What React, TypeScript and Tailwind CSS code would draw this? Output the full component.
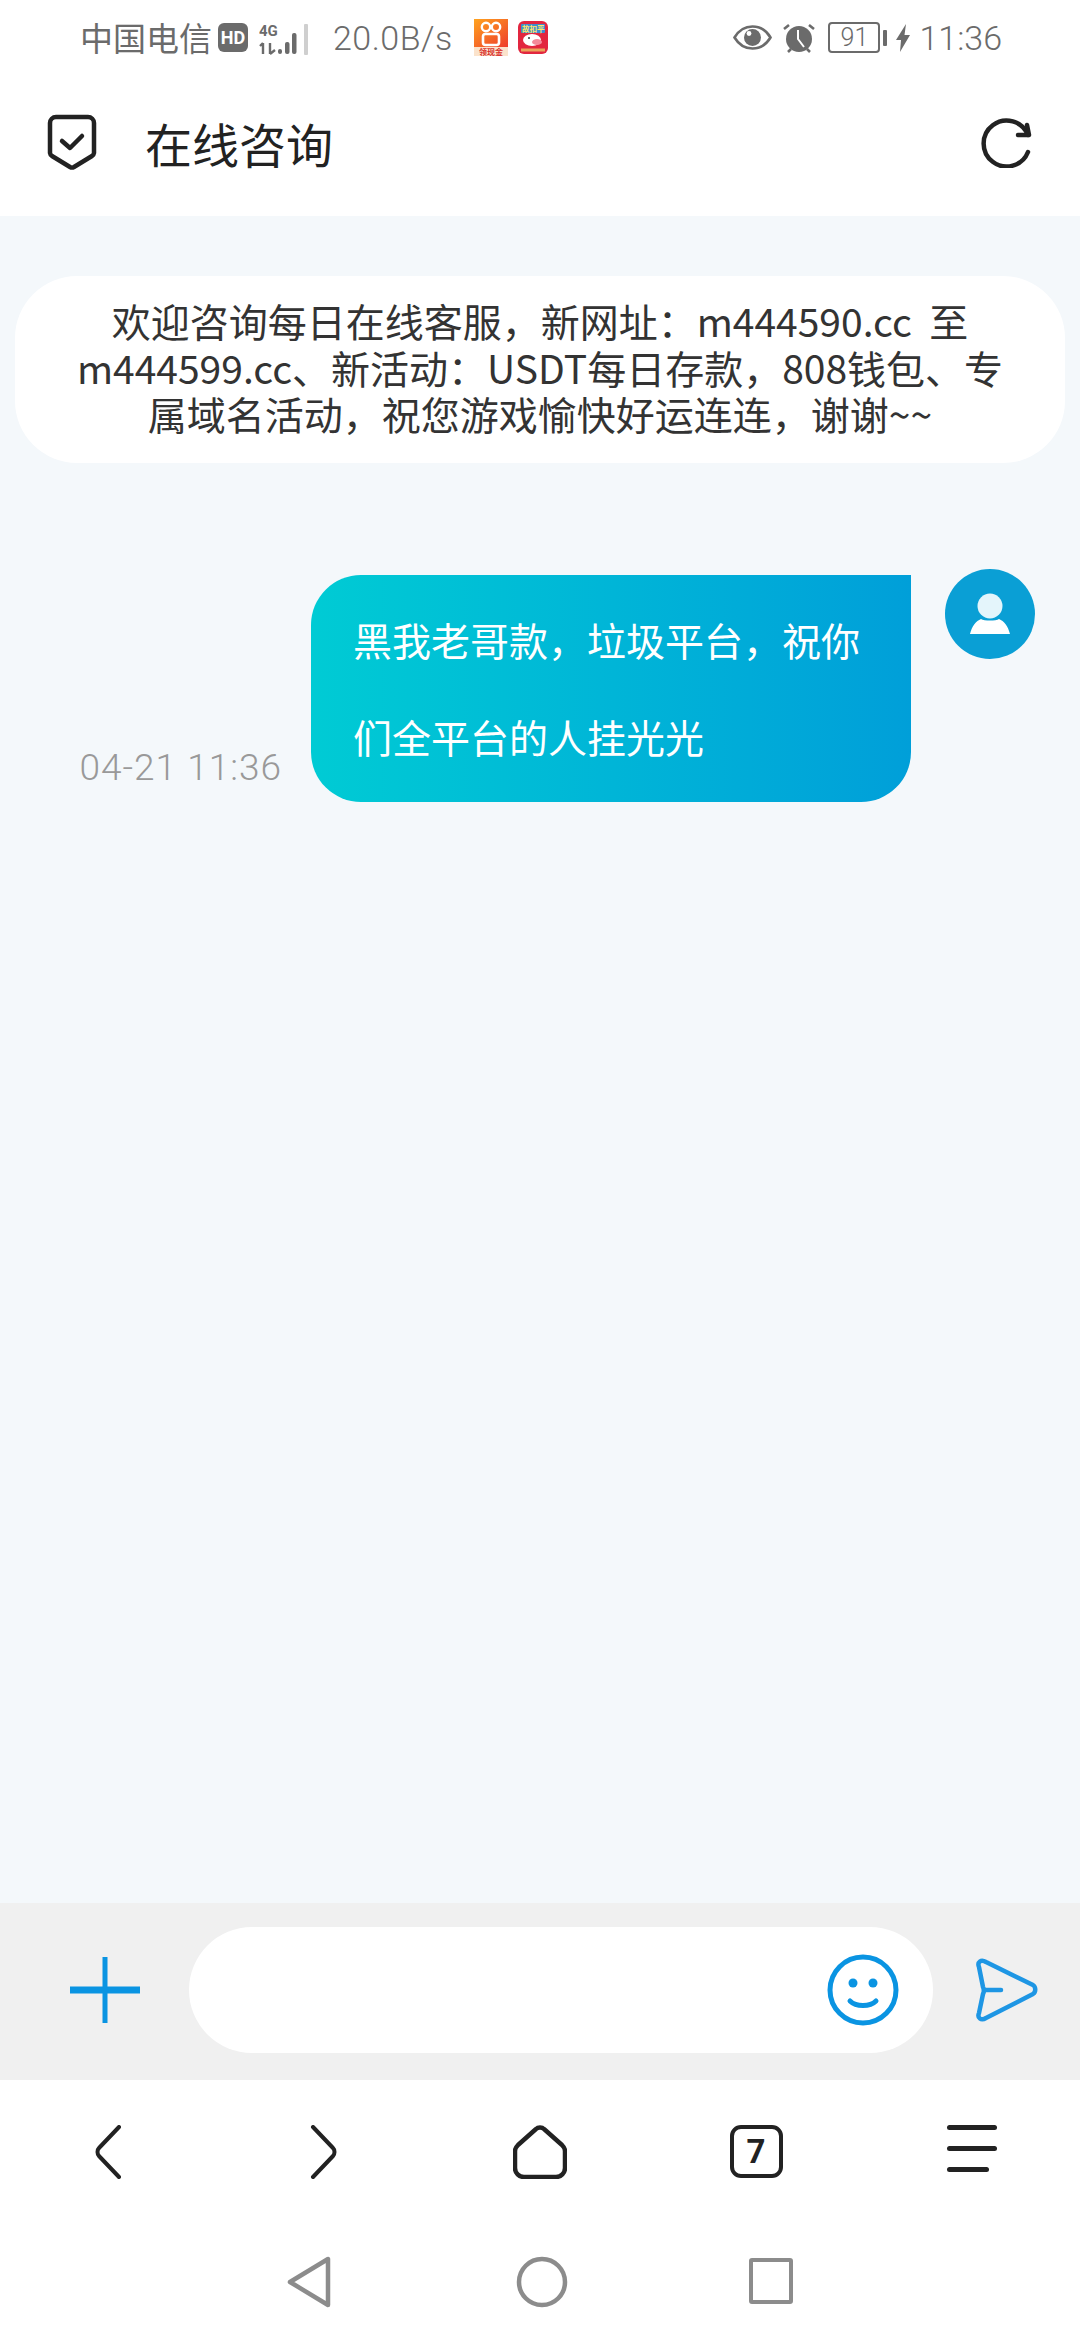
const cjk = "font-['Noto_Sans_CJK_SC','Noto_Sans',sans-serif]"

function Signal() {
  return (
    <svg width="50" height="36" viewBox="0 -4 50 36" className="ml-[11px]">
      <text x="0" y="12" fontSize="15" fontWeight="700" fontFamily="Roboto, sans-serif" fill="#6b6b6b">4G</text>
      <path d="M4 19v11M1 22l3-3M11 19v11M11 30l5-4" stroke="#6b6b6b" strokeWidth="2.4" fill="none" />
      <rect x="19" y="25" width="4" height="5" rx="2" fill="#6b6b6b" />
      <rect x="26" y="18" width="4.500" height="12" rx="2" fill="#6b6b6b" />
      <rect x="33" y="9" width="4.500" height="21" rx="2" fill="#6b6b6b" />
      <rect x="45" y="0" width="4" height="31" rx="1" fill="#cfcfcf" />
    </svg>
  )
}

function KwaiIcon() {
  return (
    <svg width="34" height="37" viewBox="0 0 34 37">
      <defs>
        <linearGradient id="kwai" x1="0" y1="0" x2="0.7" y2="1">
          <stop offset="0" stopColor="#ffa31f" />
          <stop offset="1" stopColor="#ee3a2c" />
        </linearGradient>
      </defs>
      <rect width="34" height="37" fill="url(#kwai)" />
      <circle cx="12" cy="8" r="4.200" fill="none" stroke="#fff" strokeWidth="2.4" />
      <circle cx="22" cy="8" r="4.200" fill="none" stroke="#fff" strokeWidth="2.4" />
      <rect x="9" y="15" width="16" height="11" rx="2.500" fill="none" stroke="#fff" strokeWidth="2.600" />
      <rect x="0" y="28" width="34" height="9" fill="#fbe3cc" />
      <text x="5" y="36" fontSize="8" fontWeight="700" fontFamily="'Noto Sans CJK SC', sans-serif" fill="#d8302c">领现金</text>
    </svg>
  )
}

function PigIcon() {
  return (
    <svg width="30" height="33" viewBox="0 0 30 33">
      <rect width="30" height="33" rx="6" fill="#e2263f" />
      <rect x="3" y="3" width="24" height="9" rx="1" fill="#3b8fd0" />
      <text x="4" y="11" fontSize="7.500" fontWeight="700" fontFamily="'Noto Sans CJK SC', sans-serif" fill="#ffe66a">故扣平</text>
      <ellipse cx="14" cy="19" rx="9" ry="6" fill="#fff" />
      <ellipse cx="19" cy="21" rx="5" ry="3" fill="#f48a9a" />
      <circle cx="11" cy="17" r="1" fill="#333" />
      <path d="M3 29h24" stroke="#e9a45a" strokeWidth="3" />
    </svg>
  )
}

function EyeIcon() {
  return (
    <svg width="39" height="25" viewBox="0 0 39 25">
      <path d="M1.500 12.500C6 5 12 1.500 19.500 1.500S33 5 37.500 12.500C33 20 27 23.500 19.500 23.500S6 20 1.500 12.500Z" fill="none" stroke="#6b6b6b" strokeWidth="2.600" />
      <circle cx="19.500" cy="12.500" r="8.500" fill="#6b6b6b" />
      <circle cx="16" cy="8.500" r="2.400" fill="#fff" />
    </svg>
  )
}

function AlarmIcon() {
  return (
    <svg width="34" height="30" viewBox="0 0 34 30">
      <circle cx="17" cy="16" r="13" fill="#6b6b6b" />
      <path d="M2 6l5-4M32 6l-5-4M6 29l3-3M28 29l-3-3" stroke="#6b6b6b" strokeWidth="2.600" />
      <path d="M16 7v9l6 8" fill="none" stroke="#fff" strokeWidth="2" />
    </svg>
  )
}

function Battery() {
  return (
    <div className="ml-[12px] flex items-center">
      <div className="flex h-[31px] w-[52px] items-center justify-center rounded-[4px] border-[2.5px] border-[#6b6b6b] text-[25px] leading-none font-light text-[#6b6b6b] font-['Roboto',sans-serif]">
        91
      </div>
      <div className="ml-[3px] h-[16px] w-[4px] rounded-[1px] bg-[#6b6b6b]" />
    </div>
  )
}

function StatusBar() {
  return (
    <div className="flex h-[75px] items-center justify-between pr-[78px] pl-[80px] text-[#6b6b6b]">
      <div className="flex items-center">
        <span className={`text-[33px] leading-none ${cjk}`}>中国电信</span>
        <span className="ml-[6px] flex h-[29px] w-[30px] items-center justify-center rounded-[6px] bg-[#6b6b6b] text-[18px] leading-none font-bold text-white font-['Roboto',sans-serif]">
          HD
        </span>
        <Signal />
        <span className="ml-[24px] text-[34px] leading-none font-light tracking-[0.5px] font-['Roboto',sans-serif]">20.0B/s</span>
        <span className="ml-[21px] flex items-center gap-[10px]">
          <KwaiIcon />
          <PigIcon />
        </span>
      </div>
      <div className="flex items-center">
        <EyeIcon />
        <span className="ml-[10px]">
          <AlarmIcon />
        </span>
        <Battery />
        <svg width="14" height="28" viewBox="0 0 14 28" className="ml-[9px]">
          <path d="M10 0L0 16h5L4 28 14 11H8.500Z" fill="#6b6b6b" />
        </svg>
        <span className="ml-[9px] text-[34px] leading-none font-light font-['Roboto',sans-serif]">11:36</span>
      </div>
    </div>
  )
}

function Header() {
  return (
    <div className="flex h-[141px] items-center justify-between pr-[47px] pb-[6px] pl-[47px]">
      <div className="flex items-center">
        <svg width="50" height="57" viewBox="0 0 50 57" fill="none" stroke="#222" strokeWidth="4.500">
          <path d="M9 3h32a6 6 0 0 1 6 6v30a4 4 0 0 1-2 3L27 53a4 4 0 0 1-4 0L5 42a4 4 0 0 1-2-3V9a6 6 0 0 1 6-6Z" strokeLinejoin="round" />
          <path d="M15 27l8 7 12-12" strokeLinecap="round" strokeLinejoin="round" />
        </svg>
        <h1 className={`ml-[48px] text-[47px] leading-none font-normal text-[#222] ${cjk}`}>在线咨询</h1>
      </div>
      <svg width="52" height="50" viewBox="0 0 52 50" fill="none" stroke="#222" strokeWidth="4.500" strokeLinecap="round" strokeLinejoin="round">
        <path d="M47 17A23 23 0 1 0 47 34" />
        <path d="M46 7l2 10-11 0" />
      </svg>
    </div>
  )
}

function Notice() {
  return (
    <div className={`mx-[15px] mt-[60px] rounded-[62px] bg-white px-[58px] pt-[21px] pb-[26px] text-center text-[39px] leading-[46.500px] text-[#333] ${cjk}`}>
      欢迎咨询每日在线客服，新网址：m444590.cc &nbsp;至 m444599.cc、新活动：USDT每日存款，808钱包、专属域名活动，祝您游戏愉快好运连连，谢谢~~
    </div>
  )
}

function Message() {
  return (
    <div className="mt-[112px] flex items-start justify-end pr-[45px]">
      <span className="mt-[174px] mr-[29px] text-[37px] leading-none font-light tracking-[1px] text-[#999] font-['Roboto',sans-serif]">04-21 11:36</span>
      <div className={`w-[600px] rounded-l-[50px] rounded-br-[50px] bg-gradient-to-r from-[#00cbd4] to-[#009fd9] pt-[16px] pr-[31px] pb-[17px] pl-[42px] text-[39px] leading-[97px] text-white ${cjk}`}>
        黑我老哥款，垃圾平台，祝你们全平台的人挂光光
      </div>
      <div className="-mt-[6px] ml-[34px] flex h-[90px] w-[90px] items-center justify-center rounded-full bg-[#0a9fd5]">
        <svg width="42" height="42" viewBox="0 0 42 42" fill="#fff">
          <circle cx="21" cy="13" r="12.500" fill="#e4f5fb" />
          <path d="M12 26c3 2 15 2 18 0 5 2 9 7 11 15H1c2-8 6-13 11-15Z" />
        </svg>
      </div>
    </div>
  )
}

function InputBar() {
  return (
    <div className="flex h-[177px] items-center bg-[#f0f0f0] pb-[4px]">
      <svg width="70" height="66" viewBox="0 0 70 66" className="ml-[70px]" stroke="#0a94e2">
        <path d="M0 33h70" strokeWidth="7" />
        <path d="M35 0v66" strokeWidth="5" />
      </svg>
      <div className="ml-[49px] flex h-[126px] w-[744px] items-center justify-end rounded-full bg-white pr-[34px]">
        <svg width="72" height="72" viewBox="0 0 72 72" fill="none" stroke="#0a94e2" strokeWidth="5">
          <circle cx="36" cy="36" r="33" />
          <circle cx="26" cy="29" r="4.500" fill="#0a94e2" stroke="none" />
          <circle cx="46" cy="29" r="4.500" fill="#0a94e2" stroke="none" />
          <path d="M23 47c6 6 20 6 26 0" strokeLinecap="round" strokeWidth="5" />
        </svg>
      </div>
      <svg width="66" height="64" viewBox="0 0 66 64" fill="none" stroke="#1e96e4" strokeWidth="4.500" strokeLinejoin="round" className="ml-[41px]">
        <path d="M5 9C3 4 7 1 12 4l47 23c3 2 3 7 0 9L12 60c-5 3-9 0-7-5l4-19c1-2 1-5 0-7Z" />
        <path d="M10 32h17" strokeLinecap="round" />
      </svg>
    </div>
  )
}

function BrowserBar() {
  return (
    <div className="flex h-[140px] items-center bg-white pt-[4px]">
      <div className="grid w-full grid-cols-5">
        <div className="flex justify-center">
          <svg width="28" height="54" viewBox="0 0 28 54" fill="none" stroke="#222" strokeWidth="4" strokeLinecap="round" strokeLinejoin="round">
            <path d="M25 2L5 23c-2 2-2 6 0 8l20 21" />
          </svg>
        </div>
        <div className="flex justify-center">
          <svg width="28" height="54" viewBox="0 0 28 54" fill="none" stroke="#222" strokeWidth="4" strokeLinecap="round" strokeLinejoin="round">
            <path d="M3 2l20 21c2 2 2 6 0 8L3 52" />
          </svg>
        </div>
        <div className="flex justify-center">
          <svg width="54" height="54" viewBox="0 0 54 54" fill="none" stroke="#222" strokeWidth="4.500" strokeLinejoin="round">
            <path d="M23 4c2-2 6-2 8 0l18 16c2 2 3 4 3 6v17c0 5-4 9-9 9H11c-5 0-9-4-9-9V26c0-2 1-4 3-6Z" />
          </svg>
        </div>
        <div className="flex justify-center">
          <div className="flex h-[53px] w-[53px] items-center justify-center rounded-[11px] border-[4.500px] border-[#222] text-[33px] leading-none font-bold text-[#222] font-['Roboto',sans-serif]">
            7
          </div>
        </div>
        <div className="flex justify-center">
          <div className="flex w-[50px] flex-col gap-[16px]">
            <div className="h-[5px] w-full rounded-full bg-[#222]" />
            <div className="h-[5px] w-full rounded-full bg-[#222]" />
            <div className="h-[5px] w-[42px] rounded-full bg-[#222]" />
          </div>
        </div>
      </div>
    </div>
  )
}

function NavBar() {
  return (
    <div className="flex h-[120px] items-start justify-center bg-white pt-[36px]">
      <svg width="44" height="52" viewBox="0 0 44 52" fill="none" stroke="#8c8c8c" strokeWidth="4.500" strokeLinejoin="round">
        <path d="M41 3v46L3 26Z" />
      </svg>
      <svg width="52" height="52" viewBox="0 0 52 52" fill="none" stroke="#8c8c8c" strokeWidth="4.500" className="ml-[185px]">
        <circle cx="26" cy="26" r="23" />
      </svg>
      <div className="mt-[2px] ml-[181px] h-[46px] w-[44px] rounded-[3px] border-[4.500px] border-[#8c8c8c]" />
    </div>
  )
}

function App() {
  return (
    <div className="flex h-[2340px] w-[1080px] flex-col overflow-hidden bg-white">
      <StatusBar />
      <Header />
      <main className="flex-1 bg-[#f4f8fb]">
        <Notice />
        <Message />
      </main>
      <InputBar />
      <BrowserBar />
      <NavBar />
    </div>
  )
}

export default App
